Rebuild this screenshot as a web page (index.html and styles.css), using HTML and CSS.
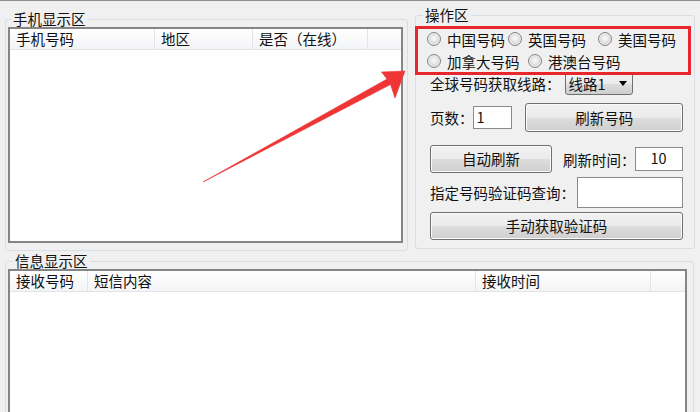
FILE: index.html
```html
<!DOCTYPE html>
<html lang="zh-CN">
<head>
<meta charset="utf-8">
<title>号码工具</title>
<link rel="stylesheet" href="styles.css">
</head>
<body>
<div class="window">
  <div class="top-row">
    <fieldset class="group group-phone">
      <legend class="legend-phone">手机显示区</legend>
      <div class="listview lv-phone">
        <div class="lv-head">
          <div class="lv-col p1">手机号码</div>
          <div class="lv-col p2">地区</div>
          <div class="lv-col p3">是否（在线）</div>
          <div class="lv-col rest"></div>
        </div>
      </div>
    </fieldset>
    <fieldset class="group group-ops">
      <legend class="legend-ops">操作区</legend>
      <div class="ops-body">
        <div class="radios">
          <div class="radio-row">
            <label class="radio w81"><span class="dot"></span>中国号码</label>
            <label class="radio w90"><span class="dot"></span>英国号码</label>
            <label class="radio"><span class="dot"></span>美国号码</label>
          </div>
          <div class="radio-row">
            <label class="radio w101"><span class="dot"></span>加拿大号码</label>
            <label class="radio"><span class="dot"></span>港澳台号码</label>
          </div>
          <div class="highlight"></div>
        </div>
        <div class="row row-line">
          <span>全球号码获取线路：</span>
          <div class="combo"><span class="combo-text">线路1</span><span class="caret"></span></div>
        </div>
        <div class="row row-page">
          <span>页数：</span>
          <div class="input input-page">1</div>
          <button class="btn btn-refresh">刷新号码</button>
        </div>
        <div class="row row-auto">
          <button class="btn btn-auto">自动刷新</button>
          <span class="label-time">刷新时间：</span>
          <div class="input input-time">10</div>
        </div>
        <div class="row row-query">
          <span>指定号码验证码查询：</span>
          <div class="input input-query"></div>
        </div>
        <button class="btn btn-manual">手动获取验证码</button>
      </div>
    </fieldset>
  </div>
  <fieldset class="group group-msg">
    <legend class="legend-msg">信息显示区</legend>
    <div class="listview lv-msg">
      <div class="lv-head">
        <div class="lv-col m1">接收号码</div>
        <div class="lv-col m2">短信内容</div>
        <div class="lv-col m3">接收时间</div>
        <div class="lv-col rest"></div>
      </div>
    </div>
  </fieldset>
  <svg class="arrow" width="700" height="412" viewBox="0 0 700 412">
    <polygon points="203,181 387,78 381.5,71 405,70 395,97 390.5,83.5" fill="#ef3535" stroke="#ef3535" stroke-width="0.6" stroke-linejoin="round"/>
  </svg>
</div>
</body>
</html>
```
FILE: styles.css
```css
html, body {
  margin: 0;
  padding: 0;
  height: 412px;
  overflow: hidden;
  background: #f0f0f0;
}

body {
  font-family: "Noto Sans CJK SC", "Noto Sans", sans-serif;
  font-size: 14.5px;
  color: #111;
}

.window {
  position: relative;
  height: 411px;
  overflow: hidden;
  border-top: 1px solid #8e8e8e;
  padding-left: 5px;
  box-sizing: content-box;
}

.top-row {
  display: flex;
  align-items: flex-start;
  gap: 7px;
}

.group {
  margin: 0;
  padding: 0;
  min-width: 0;
  border: 1px solid #d5dfe5;
  border-radius: 3px;
  box-sizing: border-box;
}

.group legend {
  padding: 0 2px;
  line-height: 16px;
  height: 16px;
}

.group-phone {
  width: 403px;
  margin-top: 10px;
}

.legend-phone { margin-left: 5px; }

.group-ops {
  width: 280px;
  margin-top: 6px;
}

.legend-ops { margin-left: 7px; }

.group-msg {
  width: 689px;
  margin-top: 2px;
  height: 300px;
}

.legend-msg { margin-left: 7px; }

/* list views */
.listview {
  background: #fff;
  border: 2px solid #858585;
  box-sizing: border-box;
  margin-left: 2px;
}

.lv-phone {
  width: 395px;
  height: 216px;
  margin-bottom: 7px;
}

.lv-msg {
  width: 679px;
  height: 200px;
}

.lv-head {
  display: flex;
  height: 21px;
  background: linear-gradient(#ffffff, #f3f4f6);
  border-bottom: 1px solid #e3e4e6;
  box-sizing: border-box;
}

.lv-col {
  box-sizing: border-box;
  border-right: 1px solid #e3e4e6;
  padding-left: 6px;
  line-height: 20px;
  white-space: nowrap;
  overflow: hidden;
}

.lv-col.rest {
  flex: 1;
  border-right: none;
}

.p1 { width: 145px; }
.p2 { width: 98px; }
.p3 { width: 115px; }
.m1 { width: 78px; }
.m2 { width: 388px; }
.m3 { width: 175px; }

/* operation area */
.ops-body {
  padding: 5px 11px 8px 14px;
}

.radios {
  position: relative;
  margin-left: -3px;
  height: 44px;
}

.radio-row {
  display: flex;
  height: 22px;
  align-items: center;
}

.radio {
  display: flex;
  align-items: center;
  white-space: nowrap;
}

.w81 { width: 81px; }
.w90 { width: 90px; }
.w101 { width: 101px; }

.dot {
  width: 14px;
  height: 14px;
  box-sizing: border-box;
  border-radius: 50%;
  border: 1px solid #858585;
  background: radial-gradient(circle at 50% 45%, #fbfbfb 0, #e2e2e2 45%, #bcbcbc 100%);
  box-shadow: inset 0 0 0 1px #ededed;
  margin-right: 6px;
  flex: none;
}

.highlight {
  position: absolute;
  left: -12px;
  right: -8px;
  top: -2px;
  bottom: -3px;
  border: 3px solid #e8262b;
  pointer-events: none;
}

.row {
  display: flex;
  align-items: center;
  white-space: nowrap;
}

.row-line {
  height: 23px;
}

.combo {
  margin-left: 4px;
  width: 68px;
  height: 23px;
  box-sizing: border-box;
  border: 1px solid #707070;
  border-radius: 3px;
  background: linear-gradient(#f2f2f2 0%, #ebebeb 50%, #dddddd 51%, #cfcfcf 100%);
  display: flex;
  align-items: center;
  padding-left: 3px;
}

.combo-text {
  flex: 1;
  line-height: 20px;
}

.caret {
  width: 0;
  height: 0;
  border-left: 4.5px solid transparent;
  border-right: 4.5px solid transparent;
  border-top: 5px solid #000;
  margin-right: 5px;
}

.row-page {
  height: 29px;
  margin-top: 8px;
}

.input {
  background: #fff;
  border: 1px solid #8a8a8a;
  box-sizing: border-box;
  line-height: 20px;
}

.input-page {
  width: 40px;
  height: 23px;
  padding-left: 3px;
  margin-left: -1px;
}

.btn {
  font: inherit;
  color: inherit;
  box-sizing: border-box;
  border: 1px solid #707070;
  border-radius: 3px;
  background: linear-gradient(#f2f2f2 0%, #ebebeb 50%, #dddddd 51%, #cfcfcf 100%);
  box-shadow: inset 0 0 0 1px #fbfbfb;
  height: 28px;
  padding: 0;
  line-height: 24px;
  text-align: center;
}

.btn-refresh {
  width: 158px;
  height: 29px;
  margin-left: 13px;
}

.row-auto {
  height: 28px;
  margin-top: 13px;
}

.btn-auto {
  width: 122px;
}

.label-time {
  margin-left: 11px;
}

.input-time {
  width: 48px;
  height: 24px;
  margin-left: -1px;
  text-align: center;
}

.row-query {
  height: 31px;
  margin-top: 4px;
}

.input-query {
  width: 106px;
  height: 31px;
  margin-left: 2px;
}

.btn-manual {
  display: block;
  width: 253px;
  margin-top: 4px;
}

.arrow {
  position: absolute;
  left: 0;
  top: 0;
  pointer-events: none;
}
```
